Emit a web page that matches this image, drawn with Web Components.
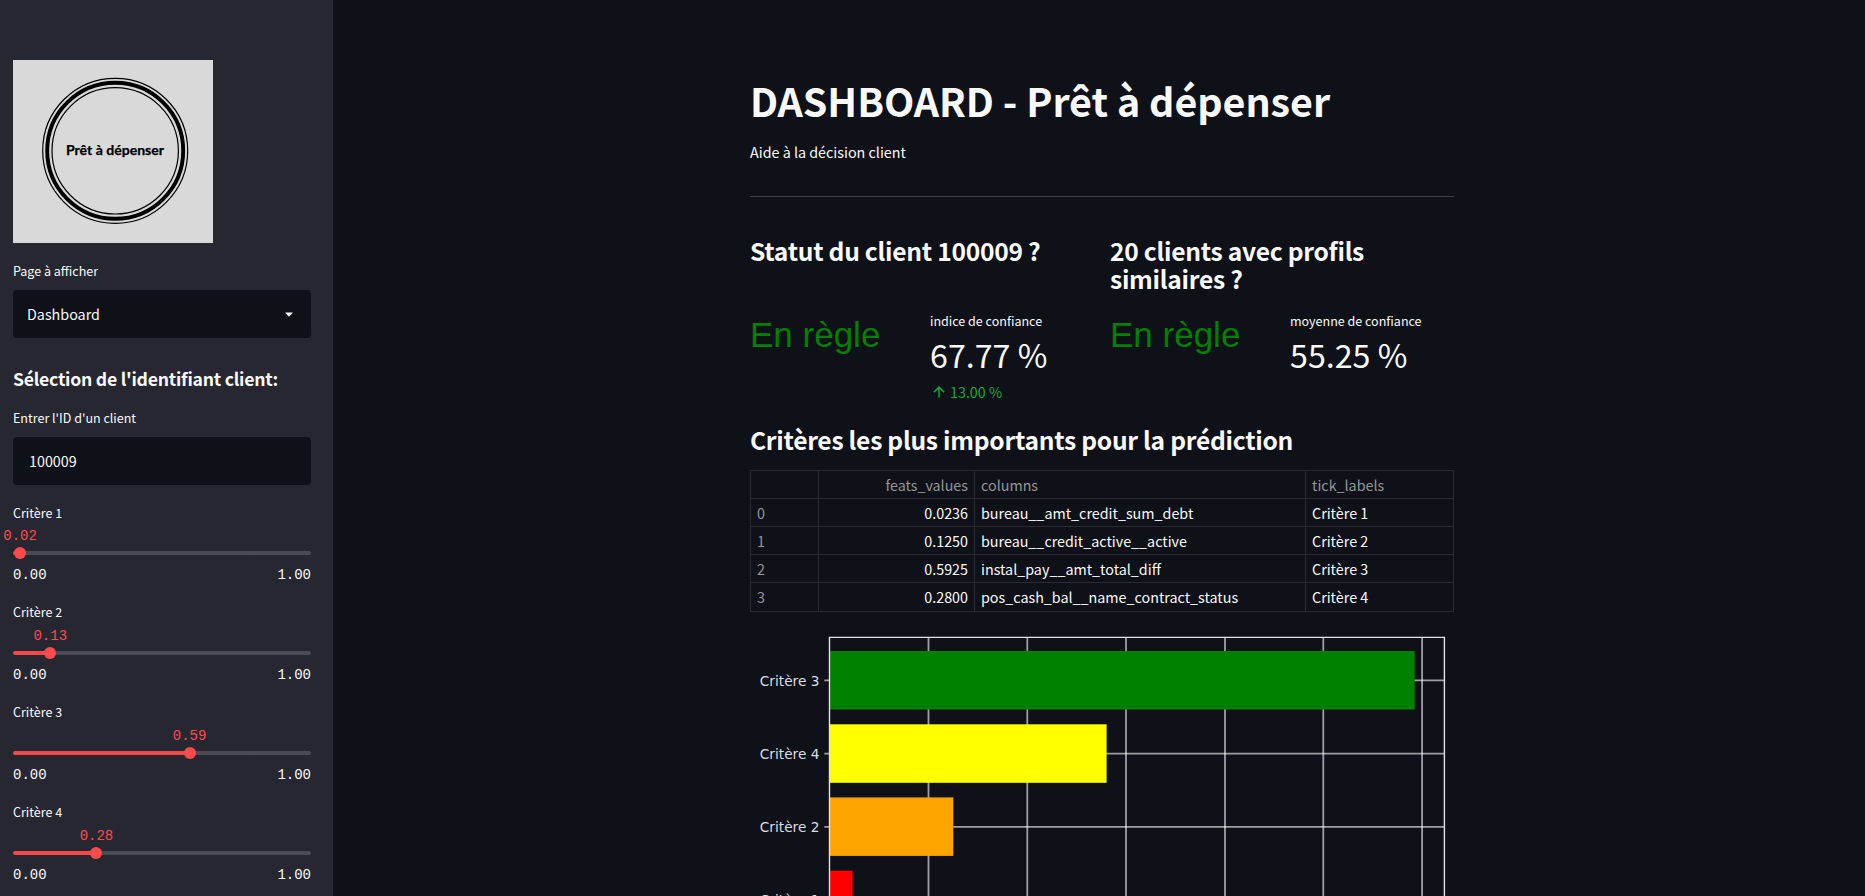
<!DOCTYPE html>
<html lang="fr">
<head>
<meta charset="utf-8">
<title>Dashboard</title>
<style>
html,body{margin:0;height:100%;background:#0e1117;color:#fafafa;overflow:hidden;
 font-family:"Noto Sans CJK JP","Noto Sans",sans-serif;--k:.8955}
</style>
</head>
<body>
<dash-app>
  <dash-sidebar slot="side">
    <brand-logo></brand-logo>
    <field-box label="Page à afficher" value="Dashboard" select></field-box>
    <side-title>Sélection de l'identifiant client:</side-title>
    <field-box label="Entrer l'ID d'un client" value="100009"></field-box>
    <range-slider label="Critère 1" value="0.0236" shown="0.02"></range-slider>
    <range-slider label="Critère 2" value="0.125" shown="0.13"></range-slider>
    <range-slider label="Critère 3" value="0.5925" shown="0.59"></range-slider>
    <range-slider label="Critère 4" value="0.28" shown="0.28"></range-slider>
  </dash-sidebar>
  <page-head>DASHBOARD - Prêt à dépenser<span slot="sub">Aide à la décision client</span></page-head>
  <status-grid>
    <status-block heading="Statut du client 100009 ?" status="En règle" label="indice de confiance" value="67.77 %" delta="13.00 %"></status-block>
    <status-block heading="20 clients avec profils similaires ?" status="En règle" label="moyenne de confiance" value="55.25 %"></status-block>
  </status-grid>
  <section-title>Critères les plus importants pour la prédiction</section-title>
  <data-table></data-table>
  <bar-chart></bar-chart>
</dash-app>
<script>
const define = (name, html, setup) => customElements.define(name, class extends HTMLElement {
  connectedCallback() {
    if (this.shadowRoot) return;
    const root = this.attachShadow({mode: 'open'});
    root.innerHTML = typeof html === 'function' ? html(this) : html;
    if (setup) setup(this, root);
  }
});
const attr = (el, n) => el.getAttribute(n) || '';

define('dash-app', `<style>
:host{display:grid;grid-template-columns:333px 1fr;height:896px;overflow:hidden}
main{padding:73px 0 0 417px;width:704px;min-width:0}
</style><slot name="side"></slot><main><slot></slot></main>`);

define('dash-sidebar', `<style>
:host{display:flex;flex-direction:column;background:#262730;padding:60px 22px 0 13px;height:836px;overflow:hidden}
</style><slot></slot>`);

define('brand-logo', `<style>:host{display:block;height:183px;margin-bottom:16px}svg{display:block}</style>
<svg width="200" height="183" viewBox="0 0 200 183"><rect width="200" height="183" fill="#d9d9d9"/>
<g fill="none" stroke="#000"><circle cx="102.2" cy="90.8" r="72.5" stroke-width="1.2"/><circle cx="102.2" cy="90.8" r="68" stroke-width="3.9"/><circle cx="102.2" cy="90.8" r="63.2" stroke-width="1.2"/></g>
<text x="53" y="94.7" textLength="98" lengthAdjust="spacingAndGlyphs" style="font:700 13px Lato,sans-serif" fill="#000" stroke="#000" stroke-width=".25">Prêt à dépenser</text></svg>`);

define('field-box', el => `<style>
:host{display:block}
label{display:block;font-size:calc(14px*var(--k));line-height:24px;height:31px}
div{height:48px;box-sizing:border-box;border-radius:4px;background:#0e1117;display:flex;align-items:center;justify-content:space-between;
 padding:0 18px 0 ${el.hasAttribute('select') ? 14 : 16}px;font-size:calc(16px*var(--k));line-height:48px}
</style><label>${attr(el,'label')}</label><div><span>${attr(el,'value')}</span>${el.hasAttribute('select') ? '<svg width="8" height="5" viewBox="0 0 8 5"><path d="M.7.4h6.6c.4 0 .5.3.3.6L4.5 4.2a.7.7 0 0 1-1 0L.4 1C.2.7.3.4.7.4z" fill="#fafafa"/></svg>' : ''}</div>`);

define('side-title', `<style>:host{display:block;font-weight:700;font-size:calc(19.7px*var(--k));letter-spacing:-.24px;line-height:24px;margin:29px 0 15px;white-space:nowrap}</style><slot></slot>`);

define('range-slider', el => {
  const p = Math.max(+attr(el,'value') * 298, 7);
  return `<style>
:host{display:block;height:100px;position:relative;top:16px;flex:none}
:host(:not(:nth-of-type(1))) label{transform:translateY(-1px)}
label{display:block;font-size:calc(14px*var(--k));line-height:24px;height:24px}
.v,.ends{font:14px/20px "Liberation Mono",monospace}
.v{color:#ff4b4b;width:60px;margin-left:${p - 30}px;text-align:center;height:19px;position:relative;top:1px}
.track{height:4px;border-radius:4px;margin-top:7px;background:linear-gradient(to right,#ff4b4b ${p}px,#4c4d57 ${p}px);opacity:.95}
.thumb{width:12px;height:12px;border-radius:50%;background:#ff4b4b;margin:-8px 0 0 ${p - 6}px;position:relative}
.ends{display:flex;justify-content:space-between;margin-top:6px}
</style><label>${attr(el,'label')}</label><div class="v">${attr(el,'shown')}</div><div class="track"></div><div class="thumb"></div><div class="ends"><span>0.00</span><span>1.00</span></div>`;
});

define('page-head', `<style>
:host{display:block}
h1{margin:0;font-size:calc(44px*var(--k));letter-spacing:-.04px;line-height:53px;font-weight:700;white-space:nowrap}
p{margin:12.5px 0 0;font-size:calc(16px*var(--k));line-height:26px}
hr{border:0;height:1px;background:#3e4046;margin:31.5px 0 0}
</style><h1><slot></slot></h1><p><slot name="sub"></slot></p><hr>`);

define('status-grid', `<style>:host{display:grid;grid-template-columns:344px 344px;gap:16px;margin-top:38.8px;height:189.3px}</style><slot></slot>`);

define('status-block', el => `<style>
:host{display:block}
h2{margin:0 0 16.2px;height:56px;font-size:calc(27.5px*var(--k));letter-spacing:-.27px;line-height:28px;font-weight:700}
.row{display:grid;grid-template-columns:164px 164px;gap:16px}
.s{font:35px/42px "Liberation Sans",sans-serif;color:#008000;padding-top:6px;white-space:nowrap}
.l{font-size:calc(14px*var(--k));line-height:25px}
.n{font-size:calc(36px*var(--k));line-height:42px}
.d{display:flex;align-items:center;gap:5px;color:#09ab3b;font-size:calc(16px*var(--k));line-height:24px;margin-top:5px;padding-left:3px}
</style><h2>${attr(el,'heading')}</h2><div class="row"><div class="s">${attr(el,'status')}</div><div><div class="l">${attr(el,'label')}</div><div class="n">${attr(el,'value')}</div>${attr(el,'delta') ? `<div class="d"><svg width="12" height="12" viewBox="0 0 12 12" fill="none" stroke="#09ab3b" stroke-width="1.5"><path d="M6 11.6V1.2M.9 6.2 6 1.1l5.1 5.1"/></svg><span>${attr(el,'delta')}</span></div>` : ''}</div></div>`);

define('section-title', `<style>:host{display:block;font-size:calc(27.5px*var(--k));letter-spacing:-.27px;line-height:28px;font-weight:700;white-space:nowrap;margin-bottom:16.9px}</style><slot></slot>`);

define('data-table', () => {
  const rows = [['0','0.0236','bureau__amt_credit_sum_debt','Critère 1'],['1','0.1250','bureau__credit_active__active','Critère 2'],['2','0.5925','instal_pay__amt_total_diff','Critère 3'],['3','0.2800','pos_cash_bal__name_contract_status','Critère 4']];
  return `<style>
:host{display:block;height:142px;font-size:calc(16px*var(--k))}
.g{display:grid;grid-template-columns:69px 156px 331px 148px;grid-template-rows:29px 28px 28px 28px 29px;border-top:0}
span{box-sizing:border-box;border:0 solid #282b32;border-width:0 1px 1px 0;padding:0 6px;line-height:27px;white-space:nowrap}
span:nth-child(4n+1){border-left-width:1px;color:#94969b}
span:nth-child(-n+4){border-top-width:1px;color:#94969b}
span:nth-child(4n+2){text-align:right}
</style><div class="g">${[['','feats_values','columns','tick_labels'],...rows].flat().map(t => `<span>${t}</span>`).join('')}</div>`;
});

define('bar-chart', () => {
  const xs = [178.5,277.3,376,475,573.3,672.1], ys = [68.4,141.6,214.8,288];
  const bars = [['green',39,664.7],['yellow',112.3,356.6],['orange',185.4,203.3],['red',258.7,102.6]];
  return `<style>:host{display:block}svg{display:block}text{font:13.7px "DejaVu Sans",sans-serif;fill:#dcdde0}</style>
<svg width="704" height="284" viewBox="0 0 704 284">
<g stroke="#fff" stroke-opacity=".6" stroke-width="1.8">${xs.map(x=>`<path d="M${x} 25.5V284"/>`).join('')}${ys.map(y=>`<path d="M74.3 ${y}H694.5"/>`).join('')}</g>
${bars.map(b=>`<rect x="79.5" y="${b[1]}" width="${b[2]-79.5}" height="58.5" fill="${b[0]}"/>`).join('')}
<path d="M79.5 284V25.4H694.4V284" fill="none" stroke="#e4e4e6" stroke-width="1.4"/>
${[3,4,2,1].map((n,i)=>`<text x="69.4" y="${ys[i]+5.3}" text-anchor="end">Critère ${n}</text>`).join('')}
</svg>`;
});
</script>
</body>
</html>
